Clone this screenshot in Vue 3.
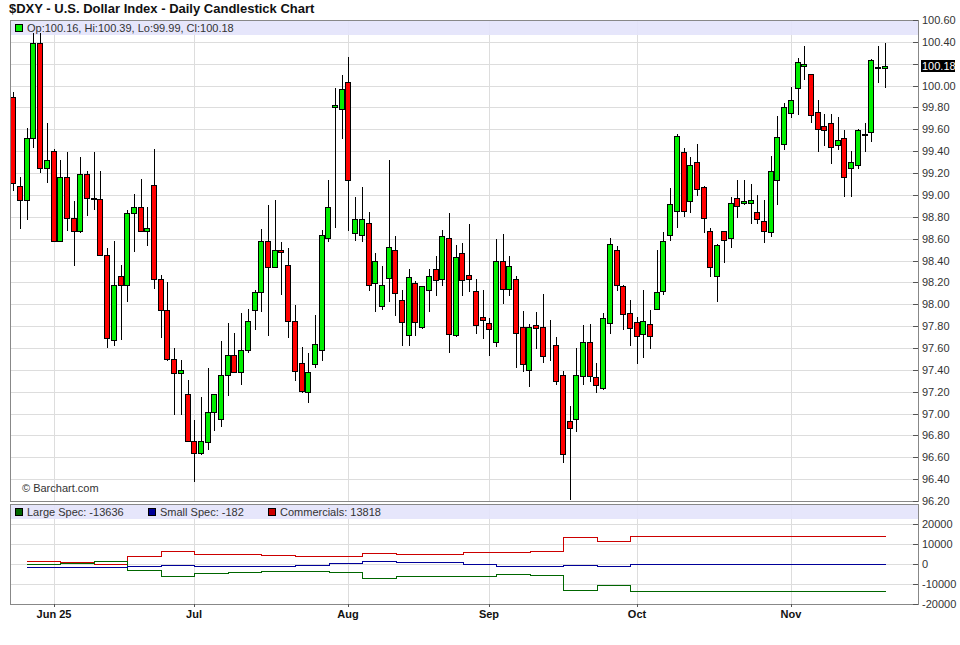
<script setup>
// candles read in pixel rows: [wick top, wick bottom, body top, body bottom, colour]
// colour: g up, r down, k = flat doji
const raw = [
  [92, 191, 97, 183, 'r'], [177, 229, 186, 200, 'r'], [128, 220, 138, 200, 'g'], [33, 148, 43, 138, 'g'],
  [33, 173, 43, 168, 'r'], [123, 183, 160, 168, 'g'], [149, 241, 151, 241, 'r'], [160, 241, 177, 241, 'g'],
  [152, 231, 177, 218, 'r'], [201, 266, 218, 231, 'r'], [157, 233, 174, 231, 'g'], [171, 216, 174, 198, 'r'],
  [152, 210, 198, 199, 'k'], [171, 255, 199, 255, 'r'], [248, 348, 255, 338, 'r'], [241, 346, 285, 340, 'g'],
  [265, 340, 276, 285, 'r'], [210, 302, 213, 285, 'g'], [194, 252, 207, 213, 'g'], [179, 232, 207, 231, 'r'],
  [207, 246, 228, 231, 'g'], [149, 289, 185, 279, 'r'], [275, 338, 279, 310, 'r'], [282, 361, 310, 359, 'r'],
  [348, 415, 359, 373, 'r'], [360, 415, 370, 373, 'g'], [380, 441, 394, 441, 'r'], [420, 482, 441, 453, 'r'],
  [397, 455, 441, 453, 'g'], [368, 450, 412, 442, 'g'], [394, 431, 394, 412, 'g'], [341, 427, 375, 419, 'g'],
  [323, 396, 355, 375, 'g'], [333, 373, 355, 372, 'r'], [313, 385, 350, 372, 'g'], [309, 353, 321, 350, 'g'],
  [290, 330, 292, 310, 'g'], [229, 312, 241, 292, 'g'], [205, 336, 241, 267, 'r'], [200, 268, 250, 267, 'g'],
  [242, 295, 250, 252, 'r'], [248, 338, 265, 321, 'r'], [305, 381, 321, 371, 'r'], [347, 393, 363, 391, 'r'],
  [353, 403, 372, 392, 'g'], [315, 368, 344, 364, 'g'], [230, 361, 235, 350, 'g'], [180, 242, 207, 238, 'g'],
  [88, 228, 105, 107, 'g'], [75, 139, 89, 109, 'g'], [57, 231, 82, 180, 'r'], [197, 241, 219, 233, 'g'],
  [187, 242, 219, 235, 'g'], [212, 291, 223, 285, 'r'], [253, 312, 261, 283, 'g'], [266, 310, 285, 306, 'g'],
  [160, 302, 247, 278, 'g'], [236, 316, 250, 293, 'r'], [290, 346, 300, 322, 'r'], [269, 346, 277, 335, 'g'],
  [281, 336, 283, 322, 'r'], [286, 329, 286, 327, 'g'], [269, 312, 276, 290, 'g'], [256, 296, 269, 280, 'r'],
  [230, 286, 236, 279, 'g'], [213, 353, 238, 334, 'r'], [245, 337, 257, 335, 'g'], [243, 296, 253, 280, 'r'],
  [224, 292, 275, 279, 'r'], [279, 334, 291, 325, 'r'], [290, 339, 317, 320, 'r'], [318, 356, 323, 329, 'r'],
  [239, 347, 261, 342, 'g'], [234, 304, 261, 289, 'r'], [256, 296, 266, 289, 'g'], [276, 368, 279, 333, 'r'],
  [311, 372, 327, 364, 'r'], [324, 387, 327, 370, 'g'], [312, 349, 325, 328, 'r'], [294, 363, 327, 356, 'r'],
  [320, 361, 353, 353, 'k'], [337, 385, 345, 381, 'r'], [371, 463, 375, 454, 'r'], [406, 500, 421, 428, 'r'],
  [348, 432, 375, 419, 'g'], [325, 385, 342, 376, 'g'], [324, 382, 342, 376, 'r'], [363, 393, 377, 385, 'r'],
  [313, 390, 318, 388, 'g'], [238, 334, 244, 323, 'g'], [246, 291, 250, 285, 'r'], [285, 330, 286, 314, 'r'],
  [300, 346, 313, 328, 'r'], [317, 364, 322, 336, 'r'], [290, 358, 321, 334, 'g'], [310, 349, 324, 336, 'r'],
  [250, 309, 292, 309, 'g'], [232, 295, 241, 291, 'g'], [188, 241, 204, 235, 'g'], [134, 228, 136, 211, 'g'],
  [148, 217, 152, 211, 'r'], [157, 213, 165, 201, 'g'], [144, 196, 162, 189, 'r'], [186, 233, 187, 218, 'r'],
  [228, 277, 231, 267, 'r'], [244, 302, 245, 276, 'g'], [231, 263, 231, 240, 'r'], [197, 248, 203, 238, 'g'],
  [180, 218, 198, 206, 'r'], [180, 205, 201, 203, 'g'], [184, 224, 200, 203, 'g'], [195, 224, 212, 219, 'r'],
  [200, 243, 221, 231, 'r'], [156, 237, 171, 232, 'g'], [116, 205, 137, 180, 'g'], [103, 150, 107, 144, 'g'],
  [87, 118, 100, 113, 'g'], [58, 115, 62, 88, 'g'], [46, 80, 64, 66, 'g'], [74, 123, 74, 115, 'r'],
  [100, 152, 112, 129, 'r'], [114, 146, 126, 130, 'r'], [114, 164, 123, 147, 'r'], [117, 150, 140, 145, 'g'],
  [130, 197, 138, 177, 'r'], [151, 197, 162, 168, 'g'], [129, 169, 130, 165, 'g'], [123, 152, 134, 135, 'k'],
  [59, 142, 60, 132, 'g'], [46, 83, 67, 68, 'k'], [43, 88, 66, 68, 'g']
]

const fills = { g: '#00ee00', r: '#ff0000', k: '#000000' }

const candles = raw.map((c, i) => ({
  x: Math.round(13.3 + 6.703 * i),
  hi: c[0],
  lo: c[1],
  top: c[2] + 0.5,
  h: c[3] - c[2],
  fill: fills[c[4]]
}))

const priceRows = [20, 42, 64, 86, 107, 129, 151, 173, 195, 217, 239, 261, 282, 304, 326, 348, 370, 392, 414, 435, 457, 479, 501]
const prices = priceRows.map((y, i) => ({ y: y + 0.5, label: (100.6 - i * 0.2).toFixed(2) }))

const months = [
  { x: 54, label: 'Jun 25' },
  { x: 194, label: 'Jul' },
  { x: 348, label: 'Aug' },
  { x: 489, label: 'Sep' },
  { x: 637, label: 'Oct' },
  { x: 791, label: 'Nov' }
]

const cotRows = [
  { y: 524, label: '20000' },
  { y: 544, label: '10000' },
  { y: 564, label: '0' },
  { y: 584, label: '-10000' },
  { y: 604, label: '-20000' }
]

// weekly step lines, one row per week then held to the last bar
const stepXs = [27, 60, 94, 127, 161, 194, 228, 261, 295, 329, 362, 396, 429, 463, 496, 530, 563, 597, 630, 886]

function stepPath(rows) {
  let d = `M${stepXs[0]} ${rows[0] + 0.5}`
  rows.forEach((y, i) => {
    d += `V${y + 0.5}H${stepXs[i + 1]}`
  })
  return d
}

const series = [
  { color: '#cc0000', d: stepPath([561, 562, 564, 556, 551, 554, 554, 555, 556, 556, 553, 554, 554, 552, 552, 551, 537, 541, 536]) },
  { color: '#006600', d: stepPath([564, 563, 561, 570, 576, 573, 572, 571, 571, 572, 578, 576, 576, 576, 574, 575, 590, 585, 591]) },
  { color: '#000099', d: stepPath([567, 567, 567, 566, 565, 566, 566, 566, 565, 563, 561, 562, 562, 564, 566, 566, 565, 566, 564]) }
]

const cotLegend = [
  { x: 15, color: '#006600', label: 'Large Spec: -13636' },
  { x: 148, color: '#000099', label: 'Small Spec: -182' },
  { x: 268, color: '#cc0000', label: 'Commercials: 13818' }
]
</script>

<template>
  <div class="page">
    <div class="title">$DXY - U.S. Dollar Index - Daily Candlestick Chart</div>
    <svg class="chart" width="960" height="625" viewBox="0 20 960 625">
      <!-- grid -->
      <g class="grid" shape-rendering="crispEdges">
        <line v-for="p in prices" :key="p.label" x1="11" x2="918" :y1="p.y" :y2="p.y" />
        <line v-for="r in cotRows" :key="r.label" x1="11" x2="918" :y1="r.y + 0.5" :y2="r.y + 0.5" />
        <template v-for="m in months" :key="m.label">
          <line :x1="m.x + 0.5" :x2="m.x + 0.5" y1="21" y2="501" />
          <line :x1="m.x + 0.5" :x2="m.x + 0.5" y1="505" y2="604" />
        </template>
      </g>

      <!-- price panel -->
      <rect class="band" x="11" y="21" width="907" height="14" />
      <g v-for="c in candles" :key="c.x">
        <line class="wick" :x1="c.x + 0.5" :x2="c.x + 0.5" :y1="c.hi" :y2="c.lo" />
        <rect class="body" :x="c.x - 2.5" :y="c.top" width="5" :height="c.h" :fill="c.fill" />
      </g>
      <rect class="swatch" x="15.5" y="24.5" width="7" height="7" fill="#00ee00" />
      <text class="label" x="27" y="32">Op:100.16, Hi:100.39, Lo:99.99, Cl:100.18</text>
      <text class="label" x="22" y="492">© Barchart.com</text>
      <rect class="frame" x="10.5" y="20.5" width="908" height="481" />

      <g v-for="p in prices" :key="'t' + p.label">
        <line class="tick" x1="913" x2="918" :y1="p.y" :y2="p.y" />
        <!-- 100.20 sits under the last price box -->
        <text v-if="p.label !== '100.20'" class="axis" x="922" :y="p.y + 3">{{ p.label }}</text>
      </g>
      <rect x="921" y="60" width="34" height="12" fill="#000000" />
      <text class="last" x="922" y="70">100.18</text>

      <!-- commitment of traders panel -->
      <rect class="band" x="11" y="505" width="907" height="14" />
      <path v-for="s in series" :key="s.color" class="step" :d="s.d" :stroke="s.color" />
      <g v-for="l in cotLegend" :key="l.x">
        <rect class="swatch" :x="l.x + 0.5" y="508.5" width="7" height="7" :fill="l.color" />
        <text class="label" :x="l.x + 12" y="516">{{ l.label }}</text>
      </g>
      <rect class="frame" x="10.5" y="504.5" width="908" height="100" />

      <g v-for="r in cotRows" :key="'c' + r.label">
        <line class="tick" x1="913" x2="918" :y1="r.y + 0.5" :y2="r.y + 0.5" />
        <text class="axis" x="922" :y="r.y + 3.5">{{ r.label }}</text>
      </g>
      <g v-for="m in months" :key="'m' + m.label">
        <line class="tick" :x1="m.x + 0.5" :x2="m.x + 0.5" y1="604" y2="607" />
        <text class="month" :x="m.x" y="618">{{ m.label }}</text>
      </g>
    </svg>
  </div>
</template>

<style>
html, body {
  background: #ffffff;
}
</style>

<style scoped>
.page {
  width: 960px;
  height: 645px;
  overflow: hidden;
  background: #ffffff;
  font-family: "Liberation Sans", Arial, sans-serif;
}

.title {
  height: 20px;
  padding-left: 9px;
  box-sizing: border-box;
  font-size: 13px;
  line-height: 17px;
  font-weight: 700;
  color: #111111;
}

.chart {
  display: block;
  overflow: visible;
}

.grid line {
  stroke: #dddddd;
  stroke-width: 1;
}

.band {
  fill: #e3e3fb;
  fill-opacity: 0.9;
}

.wick {
  stroke: #000000;
  stroke-width: 1;
  shape-rendering: crispEdges;
}

.body {
  stroke: #000000;
  stroke-width: 1;
  shape-rendering: crispEdges;
}

.swatch {
  stroke: #000000;
  stroke-width: 1;
  shape-rendering: crispEdges;
}

.frame {
  fill: none;
  stroke: #888888;
  stroke-width: 1;
  shape-rendering: crispEdges;
}

.tick {
  stroke: #555555;
  stroke-width: 1;
  shape-rendering: crispEdges;
}

.step {
  fill: none;
  stroke-width: 1;
  shape-rendering: crispEdges;
}

.label {
  font-size: 11px;
  fill: #333333;
}

.axis {
  font-size: 11px;
  fill: #333333;
}

.last {
  font-size: 11px;
  fill: #ffffff;
}

.month {
  font-size: 11px;
  font-weight: 700;
  fill: #111111;
  text-anchor: middle;
}
</style>
